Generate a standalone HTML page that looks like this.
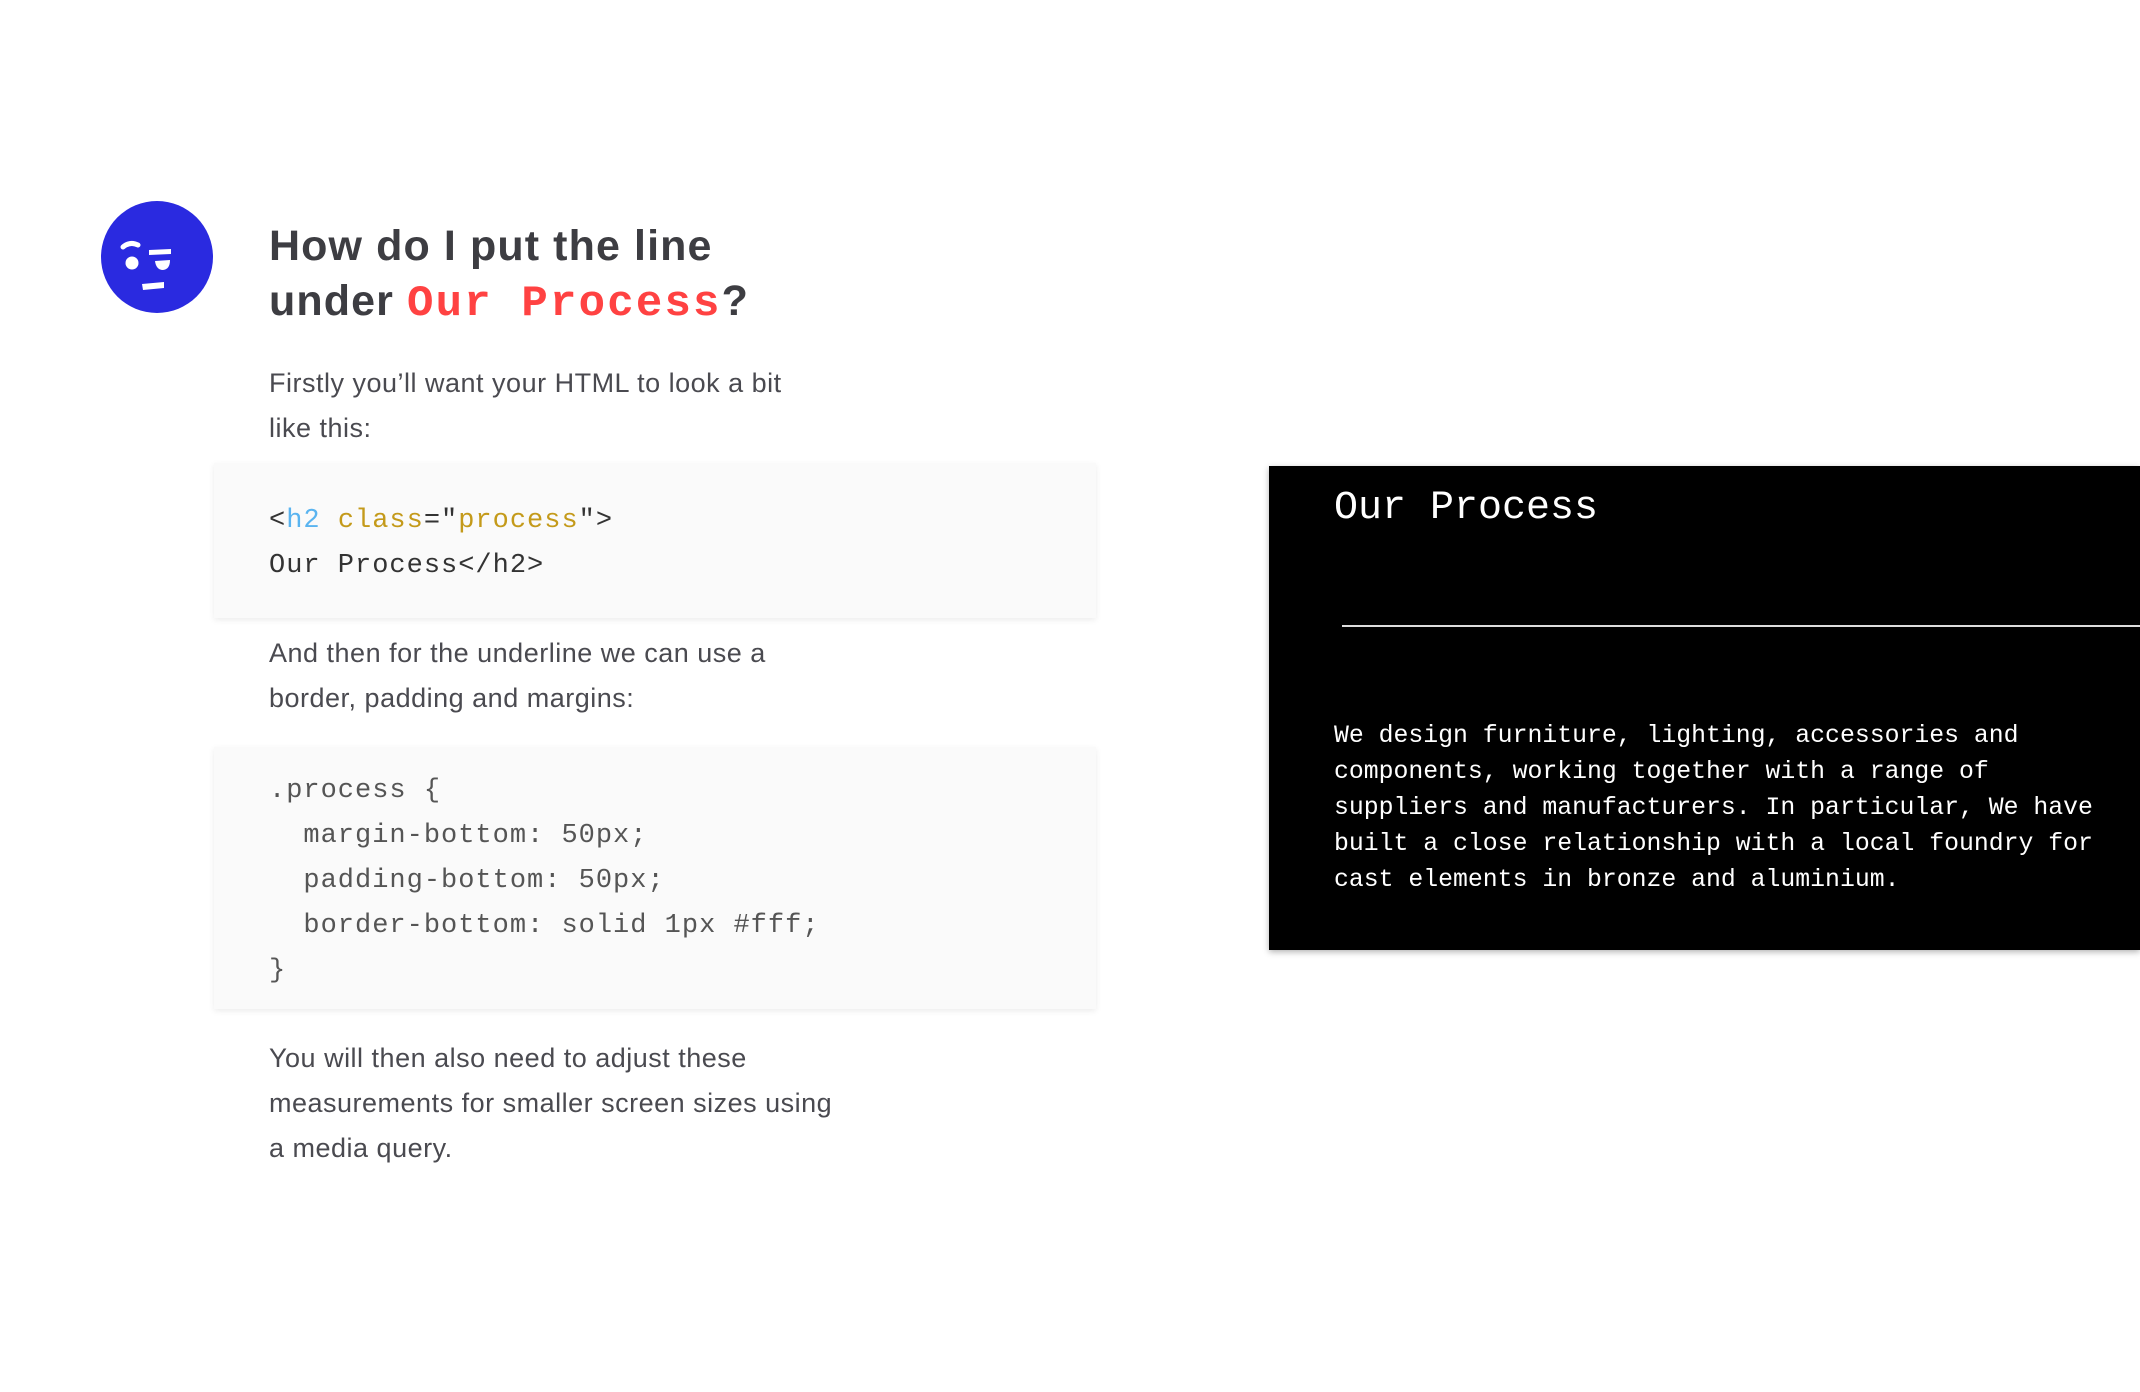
<!DOCTYPE html>
<html><head><meta charset="utf-8"><style>
body{margin:0;width:2140px;height:1392px;background:#fff;position:relative;overflow:hidden;font-family:"Liberation Sans",sans-serif}
.a{position:absolute;white-space:pre}
.h{font-weight:bold;font-size:43px;color:#3d3d42;line-height:55px;letter-spacing:1.1px}
.red{color:#ff4242;font-family:"Liberation Mono",monospace;font-size:44px;letter-spacing:2.2px}
.p{font-size:27px;color:#4a4a50;line-height:45px;letter-spacing:0.5px}
.box{position:absolute;background:#fafafa;box-shadow:0 2px 6px rgba(0,0,0,0.08)}
.c{font-family:"Liberation Mono",monospace;font-size:27px;color:#333;line-height:45px;letter-spacing:1px}
.w{font-family:"Liberation Mono",monospace;color:#fff;white-space:pre}
</style></head><body>
<svg class="a" style="left:100px;top:200px" width="114" height="114" viewBox="0 0 114 114">
<circle cx="57" cy="57" r="56" fill="#2a2ae0"/>
<path d="M23 47 Q30 41 38 45" stroke="#fff" stroke-width="5" fill="none" stroke-linecap="round"/>
<circle cx="32" cy="63" r="6.5" fill="#fff"/>
<path d="M49 50 L71 49 L71 54 L49 55Z" fill="#fff"/>
<path d="M55 61 L70 60 Q70 70 62 70 Q56 69 55 61Z" fill="#fff"/>
<path d="M42 84 L64 82 L64 88 L43 90Z" fill="#fff"/>
</svg>
<div class="a h" style="left:269px;top:219px">How do I put the line</div>
<div class="a h" style="left:269px;top:274px">under <span class="red">Our Process</span>?</div>
<div class="a p" style="left:269px;top:361px">Firstly you’ll want your HTML to look a bit</div>
<div class="a p" style="left:269px;top:406px">like this:</div>
<div class="box" style="left:214px;top:463px;width:882px;height:155px"></div>
<div class="a c" style="left:269px;top:499px">&lt;<span style="color:#5ab4f0">h2</span> <span style="color:#c49a1a">class</span>="<span style="color:#c49a1a">process</span>"&gt;</div>
<div class="a c" style="left:269px;top:544px">Our Process&lt;/h2&gt;</div>
<div class="a p" style="left:269px;top:631px">And then for the underline we can use a</div>
<div class="a p" style="left:269px;top:676px">border, padding and margins:</div>
<div class="box" style="left:214px;top:747px;width:882px;height:262px"></div>
<div class="a c" style="left:269px;top:769px;color:#555">.process {
  margin-bottom: 50px;
  padding-bottom: 50px;
  border-bottom: solid 1px #fff;
}</div>
<div class="a p" style="left:269px;top:1036px">You will then also need to adjust these
measurements for smaller screen sizes using
a media query.</div>
<div style="position:absolute;left:1269px;top:466px;width:871px;height:484px;background:#000;box-shadow:0 2px 6px rgba(0,0,0,0.3)"></div>
<div class="a w" style="left:1334px;top:485px;font-size:40px;line-height:48px">Our Process</div>
<div style="position:absolute;left:1342px;top:625px;width:798px;height:2px;background:#ddd"></div>
<div class="a w" style="left:1334px;top:718px;font-size:24.8px;line-height:36px">We design furniture, lighting, accessories and
components, working together with a range of
suppliers and manufacturers. In particular, We have
built a close relationship with a local foundry for
cast elements in bronze and aluminium.</div>
</body></html>
